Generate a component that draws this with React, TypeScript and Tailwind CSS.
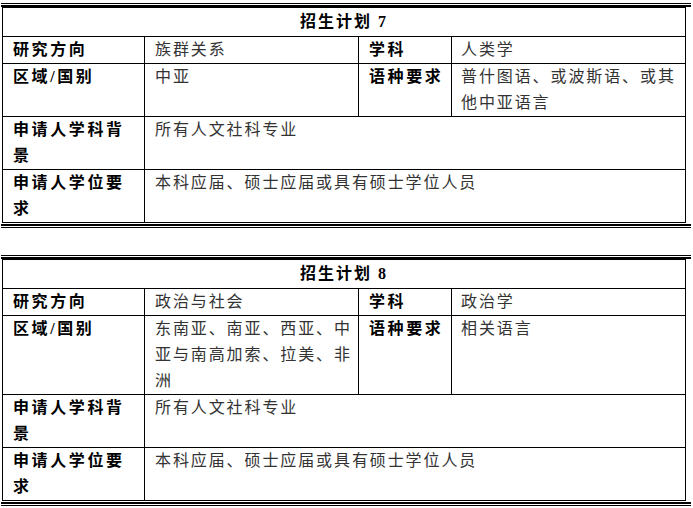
import React from "react";

type Plan = {
  no: number;
  direction: string;
  subject: string;
  region: string[];
  language: string[];
};

const PLANS: Plan[] = [
  {
    no: 7,
    direction: "族群关系",
    subject: "人类学",
    region: ["中亚"],
    language: ["普什图语、或波斯语、或其", "他中亚语言"],
  },
  {
    no: 8,
    direction: "政治与社会",
    subject: "政治学",
    region: ["东南亚、南亚、西亚、中", "亚与南高加索、拉美、非", "洲"],
    language: ["相关语言"],
  },
];

const FONT = "font-['Liberation_Serif','Noto_Sans_CJK_SC',serif]";

const Lines = ({ lines }: { lines: string[] }) => (
  <>
    {lines.map((l, i) => (
      <div key={i} className="whitespace-nowrap">
        {l}
      </div>
    ))}
  </>
);

const Label = ({ lines, last }: { lines: string[]; last?: boolean }) => (
  <div className={`pl-[10px] font-bold tracking-[2.6px] text-black ${last ? "" : "border-r border-black"}`}>
    <Lines lines={lines} />
  </div>
);

const Value = ({ lines, last, pad = "pl-[10px]" }: { lines: string[]; last?: boolean; pad?: string }) => (
  <div className={`${pad} tracking-[1.9px] text-[#333] ${last ? "" : "border-r border-black"}`}>
    <Lines lines={lines} />
  </div>
);

const PlanTable = ({ plan }: { plan: Plan }) => (
  <div>
    <div className="ml-px h-px w-[690px] bg-black" />
    <div className="ml-px mt-px h-[2px] w-[690px] bg-black" />
    <div className="ml-[2px] w-[684px] border-x border-b border-black text-[16px] leading-[26px]">
      <div className="border-t border-black py-px text-center font-bold tracking-[2px] text-black">
        招生计划 {plan.no}
      </div>
      <div className="grid grid-cols-[142px_214px_93px_1fr] border-t border-black">
        <Label lines={["研究方向"]} />
        <Value lines={[plan.direction]} />
        <Label lines={["学科"]} />
        <Value lines={[plan.subject]} last pad="pl-[9px]" />
      </div>
      <div className="grid grid-cols-[142px_214px_93px_1fr] border-t border-black">
        <Label lines={["区域/国别"]} />
        <div className="flex flex-col border-r border-black">
          <Value lines={plan.region} last />
          {plan.region.length < 2 && <div className="h-[26px]" />}
        </div>
        <Label lines={["语种要求"]} />
        <Value lines={plan.language} last pad="pl-[9px]" />
      </div>
      <div className="grid grid-cols-[142px_1fr] border-t border-black">
        <Label lines={["申请人学科背", "景"]} />
        <Value lines={["所有人文社科专业"]} last />
      </div>
      <div className="grid grid-cols-[142px_1fr] border-t border-black">
        <Label lines={["申请人学位要", "求"]} />
        <Value lines={["本科应届、硕士应届或具有硕士学位人员"]} last />
      </div>
    </div>
    <div className="ml-px mt-px h-[2px] w-[690px] bg-black" />
    <div className="ml-px mt-px h-px w-[690px] bg-black" />
  </div>
);

export default function App() {
  return (
    <div className={`h-[508px] w-[693px] bg-white pt-[3px] ${FONT}`}>
      <PlanTable plan={PLANS[0]} />
      <div className="h-[27px]" />
      <PlanTable plan={PLANS[1]} />
    </div>
  );
}
